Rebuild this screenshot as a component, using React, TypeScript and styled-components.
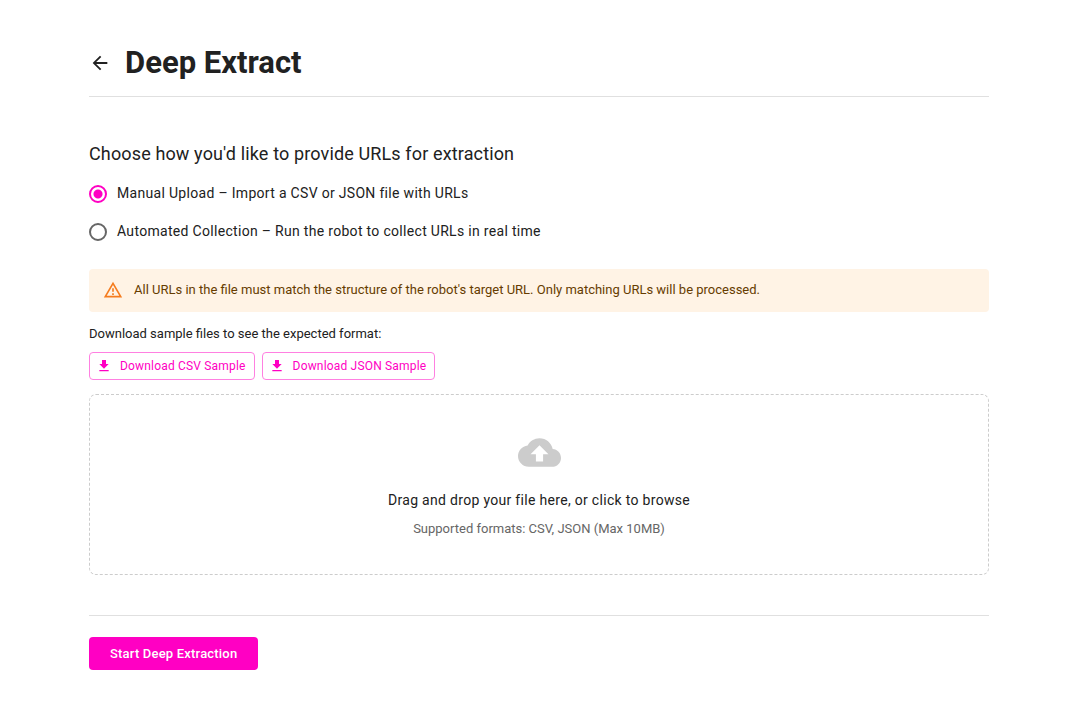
import React, { useRef, useState } from "react";
import styled, { createGlobalStyle } from "styled-components";

const pink = "#ff00c3";

const GlobalStyle = createGlobalStyle`
  *, *::before, *::after { box-sizing: border-box; }
  body {
    margin: 0;
    background: #fff;
    color: #212121;
    font-family: Roboto, "Liberation Sans", sans-serif;
    font-size: 14px;
    line-height: 22px;
  }
  button, input { font-family: inherit; }
`;

const Page = styled.main`
  padding: 36px 100px 36px 89px;
`;

const Header = styled.header`
  display: flex;
  align-items: center;
  gap: 14px;
  padding: 7px 0 14px;
  border-bottom: 1px solid #e0e0e0;
`;

const BackButton = styled.button`
  display: flex;
  padding: 0;
  border: 0;
  background: none;
  color: inherit;
  cursor: pointer;
`;

const Title = styled.h1`
  margin: 0;
  font-size: 31px;
  line-height: 39px;
  font-weight: 700;
`;

const Icon = styled.svg<{ $size: number }>`
  display: block;
  flex: none;
  width: ${(p) => p.$size}px;
  height: ${(p) => p.$size}px;
  fill: currentColor;
`;

const SourceGroup = styled.fieldset`
  margin: 43px 0 0;
  padding: 0;
  border: 0;
  min-width: 0;
`;

const SourceLegend = styled.legend`
  padding: 0;
  font-size: 18px;
  line-height: 28px;
  letter-spacing: 0.0075em;
`;

const RadioRow = styled.label`
  display: flex;
  align-items: center;
  gap: 10px;
  height: 38px;
  letter-spacing: 0.022em;
  cursor: pointer;

  &:first-of-type { margin-top: 7px; }
`;

const RadioText = styled.span`
  padding-bottom: 2px;
`;

const Radio = styled.input`
  appearance: none;
  flex: none;
  width: 18px;
  height: 18px;
  margin: 0;
  border: 2px solid #666;
  border-radius: 50%;
  cursor: pointer;

  &:checked {
    border-color: ${pink};
    background: radial-gradient(circle, ${pink} 4px, transparent 5px);
  }
`;

const Warning = styled.div`
  display: flex;
  align-items: center;
  gap: 11px;
  margin-top: 18px;
  padding: 10px 14px 12px;
  border-radius: 4px;
  background: #fff3e5;
  color: #663c00;
  font-size: 13px;
  line-height: 21px;
`;

const WarningIcon = styled(Icon)`
  color: #f57c1f;
`;

const SampleHint = styled.p`
  margin: 12px 0 9px;
  font-size: 13px;
  line-height: 19px;
`;

const SampleButtons = styled.div`
  display: flex;
  flex-wrap: wrap;
  gap: 7px;
`;

const SampleButton = styled.button`
  display: flex;
  align-items: center;
  gap: 8px;
  height: 28px;
  padding: 0 8px 0 6px;
  border: 1px solid #ff80e1;
  border-radius: 4px;
  background: #fff;
  color: ${pink};
  font-size: 12px;
  letter-spacing: 0.015em;
  cursor: pointer;
`;

const DropZone = styled.button`
  display: flex;
  flex-direction: column;
  align-items: center;
  width: 100%;
  margin-top: 14px;
  padding: 36px;
  border: 1px dashed #ccc;
  border-radius: 7px;
  background: #fff;
  color: #212121;
  cursor: pointer;
`;

const UploadIcon = styled(Icon)`
  color: #ccc;
`;

const DropText = styled.span`
  margin-top: 15px;
  font-size: 14px;
  line-height: 22px;
  letter-spacing: 0.022em;
`;

const FormatText = styled.span`
  margin-top: 8px;
  color: #666;
  font-size: 13px;
  line-height: 19px;
`;

const Footer = styled.footer`
  margin-top: 40px;
  padding-top: 21px;
  border-top: 1px solid #e0e0e0;
`;

const StartButton = styled.button`
  height: 33px;
  padding: 0 21px;
  border: 0;
  border-radius: 4px;
  background: ${pink};
  color: #fff;
  font-size: 13px;
  font-weight: 500;
  letter-spacing: 0.015em;
  cursor: pointer;
`;

const sources = [
  { id: "manual", label: "Manual Upload – Import a CSV or JSON file with URLs" },
  { id: "automated", label: "Automated Collection – Run the robot to collect URLs in real time" },
];

const DownloadIcon = () => (
  <Icon $size={16} viewBox="0 0 24 24" aria-hidden="true">
    <path d="M5 20h14v-2H5v2zM19 9h-4V3H9v6H5l7 7 7-7z" />
  </Icon>
);

export default function App() {
  const [source, setSource] = useState("manual");
  const fileInput = useRef<HTMLInputElement>(null);

  return (
    <>
      <GlobalStyle />
      <Page>
        <Header>
          <BackButton type="button" aria-label="Back">
            <Icon $size={22} viewBox="0 0 24 24" aria-hidden="true">
              <path d="M20 11H7.83l5.59-5.59L12 4l-8 8 8 8 1.41-1.41L7.83 13H20v-2z" />
            </Icon>
          </BackButton>
          <Title>Deep Extract</Title>
        </Header>

        <SourceGroup>
          <SourceLegend>Choose how you'd like to provide URLs for extraction</SourceLegend>
          {sources.map(({ id, label }) => (
            <RadioRow key={id} htmlFor={id}>
              <Radio
                type="radio"
                id={id}
                name="source"
                checked={source === id}
                onChange={() => setSource(id)}
              />
              <RadioText>{label}</RadioText>
            </RadioRow>
          ))}
        </SourceGroup>

        <Warning role="alert">
          <WarningIcon $size={20} viewBox="0 0 24 24" aria-hidden="true">
            <path d="M12 5.99L19.53 19H4.47L12 5.99M12 2L1 21h22L12 2zm1 14h-2v2h2v-2zm0-6h-2v4h2v-4z" />
          </WarningIcon>
          All URLs in the file must match the structure of the robot's target URL. Only matching URLs will be processed.
        </Warning>

        <SampleHint>Download sample files to see the expected format:</SampleHint>
        <SampleButtons>
          <SampleButton type="button">
            <DownloadIcon />
            Download CSV Sample
          </SampleButton>
          <SampleButton type="button">
            <DownloadIcon />
            Download JSON Sample
          </SampleButton>
        </SampleButtons>

        <DropZone type="button" onClick={() => fileInput.current?.click()}>
          <UploadIcon $size={43} viewBox="0 0 24 24" aria-hidden="true">
            <path d="M19.35 10.04C18.67 6.59 15.64 4 12 4 9.11 4 6.6 5.64 5.35 8.04 2.34 8.36 0 10.91 0 14c0 3.31 2.69 6 6 6h13c2.76 0 5-2.24 5-5 0-2.64-2.05-4.78-4.65-4.96zM14 13v4h-4v-4H7l5-5 5 5h-3z" />
          </UploadIcon>
          <DropText>Drag and drop your file here, or click to browse</DropText>
          <FormatText>Supported formats: CSV, JSON (Max 10MB)</FormatText>
        </DropZone>
        <input ref={fileInput} type="file" accept=".csv,.json" aria-label="URL file" hidden />

        <Footer>
          <StartButton type="button">Start Deep Extraction</StartButton>
        </Footer>
      </Page>
    </>
  );
}
